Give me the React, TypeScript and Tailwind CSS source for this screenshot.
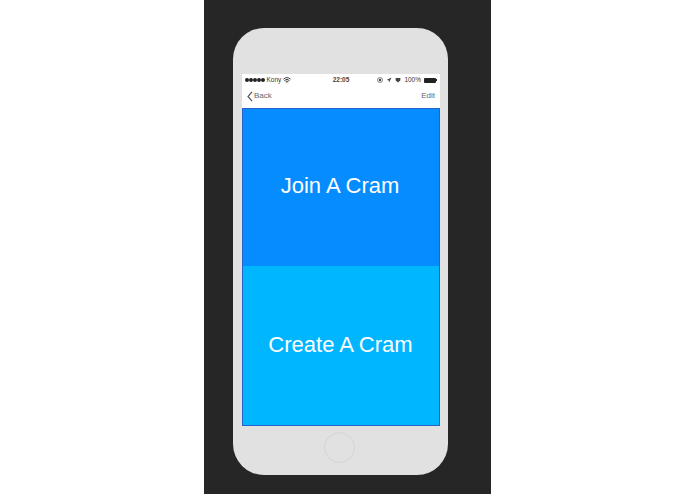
import { Wifi } from 'lucide-react';

const StatusBar = () => (
    <div className="flex h-[12px] items-center justify-between pl-[3px] pr-[3px] text-[6.5px] leading-none text-[#333]">
        <div className="flex flex-1 items-center gap-[2px]">
            <div className="flex gap-[0.5px]">
                {[0, 1, 2, 3, 4].map((i) => (
                    <span key={i} className="h-[3.5px] w-[3.5px] rounded-full bg-[#222]" />
                ))}
            </div>
            <span>Kony</span>
            <Wifi size={8} strokeWidth={3} className="text-[#444]" />
        </div>
        <span className="font-bold text-[#444]">22:05</span>
        <div className="flex flex-1 items-center justify-end gap-[3px]">
            <svg width="6" height="6" viewBox="0 0 6 6">
                <circle cx="3" cy="3" r="2.5" fill="none" stroke="#555" strokeWidth="0.7" />
                <circle cx="3" cy="3" r="1.2" fill="#444" />
            </svg>
            <svg width="6" height="6" viewBox="0 0 6 6">
                <path d="M5.5 0.5 L0.5 3 L2.7 3.3 L3 5.5 Z" fill="#444" />
            </svg>
            <svg width="6" height="6" viewBox="0 0 6 6">
                <path d="M0.5 1 L5.5 1 L5.2 3.5 L3 5.5 L0.8 3.5 Z" fill="#444" />
            </svg>
            <span>100%</span>
            <div className="flex items-center">
                <div className="h-[5px] w-[12px] rounded-[1px] bg-[#222]" />
                <div className="h-[2px] w-[1px] bg-[#222]" />
            </div>
        </div>
    </div>
);

const NavBar = () => (
    <div className="flex h-[22px] items-center justify-between pb-[2px] pl-[5px] pr-[5px] text-[8px] text-[#666]">
        <div className="flex items-center gap-[1px]">
            <svg width="6" height="11" viewBox="0 0 6 11">
                <path d="M5 0.8 L1 5.5 L5 10.2" fill="none" stroke="#555" strokeWidth="1.2" />
            </svg>
            <span>Back</span>
        </div>
        <span>Edit</span>
    </div>
);

const App = () => {
    return (
        <div className="flex h-[494px] w-[695px] justify-center overflow-hidden bg-white font-['Liberation_Sans',Arial,sans-serif]">
            <div className="h-full w-[287px] bg-[#262626] pl-[29px] pt-[28px]">
                <div className="flex h-[447px] w-[215px] flex-col items-start rounded-[31px] bg-[#e1e1e1] pl-[9px] pt-[46px]">
                    <div className="w-[198px]">
                        <div className="bg-white">
                            <StatusBar />
                            <NavBar />
                        </div>
                        <div className="border border-[#2b62c8]">
                            <div className="flex h-[157px] items-center justify-center bg-[#058cff] pb-[4px] pr-[2px] text-[22px] text-white">Join A Cram</div>
                            <div className="flex h-[159px] items-center justify-center bg-[#00b6ff] pb-[3px] pr-[1px] text-[22px] text-white">Create A Cram</div>
                        </div>
                    </div>
                    <div className="ml-[82px] mt-[6px] h-[31px] w-[31px] rounded-full border border-[#d4d4d4]" />
                </div>
            </div>
        </div>
    );
};

export default App;
